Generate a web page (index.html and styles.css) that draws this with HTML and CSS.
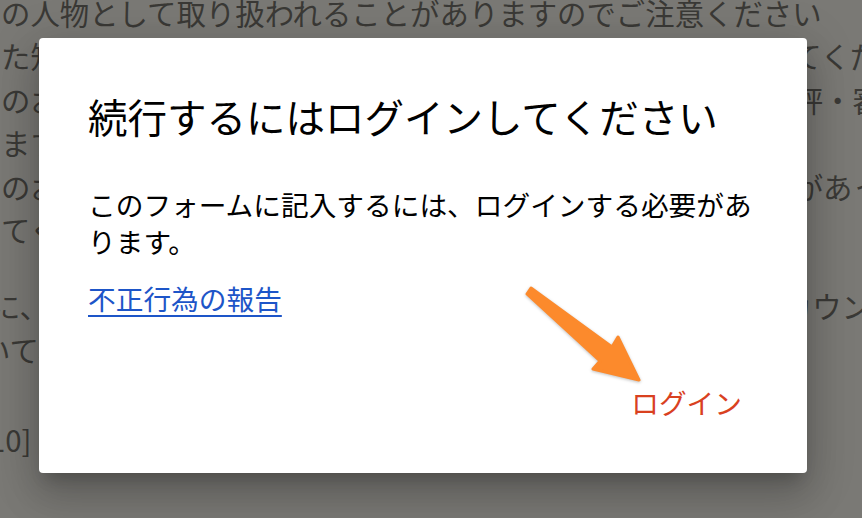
FILE: index.html
```html
<!DOCTYPE html>
<html lang="ja">
<head>
<meta charset="utf-8">
<title>ログイン</title>
<link rel="stylesheet" href="styles.css">
</head>
<body>
<div class="page">
  <div class="para">
    <div class="line">の人物として取り扱われることがありますのでご注意ください</div>
    <div class="line">た知識や経験をもとに、事実に基づいた正確な内容を記入してください</div>
    <div class="line">のお店や施設についての感想、体験談、サービスへの率直な評・審査</div>
    <div class="line">ます。以下の点についてご確認ください。</div>
    <div class="line">のお客様からいただいたご意見の中に、不適切な表現や内容があった</div>
    <div class="line">てください。</div>
  </div>
  <div class="para para-2">
    <div class="line shift-a">に、投稿内容が規約に違反していると判断された場合は、アカウントを</div>
    <div class="line shift-b">いて、順次対応いたします。</div>
  </div>
  <div class="para para-3">
    <div class="line shift-c">[10]</div>
  </div>
</div>

<div class="dialog" role="dialog" aria-labelledby="dlg-title">
  <h2 class="dialog-title" id="dlg-title">続行するにはログインしてください</h2>
  <p class="dialog-text">このフォームに記入するには、ログインする必要があります。</p>
  <p class="dialog-link-row"><a class="dialog-link" href="#">不正行為の報告</a></p>
  <div class="dialog-actions">
    <button class="dialog-button" type="button">ログイン</button>
  </div>
</div>

<svg class="arrow" width="862" height="518" viewBox="0 0 862 518" aria-hidden="true">
  <polygon points="531,288 612,347 618,337 639,380 593,369 600,361 527,294" fill="#fc8a2c" stroke="#fc8a2c" stroke-width="3" stroke-linejoin="round"/>
</svg>
</body>
</html>
```
FILE: styles.css
```css
html, body {
  margin: 0;
  padding: 0;
}
body {
  width: 862px;
  height: 518px;
  overflow: hidden;
  background: #7a7975;
  font-family: "Noto Sans CJK JP", "Noto Sans", sans-serif;
  position: relative;
}
.page {
  margin-top: -9px;
  color: #3a3936;
  font-size: 29.4px;
  line-height: 43.4px;
}
.line {
  white-space: nowrap;
  margin-left: 1px;
}
.para-2 {
  margin-top: 33px;
}
.para-3 {
  margin-top: 47px;
}
.shift-a { margin-left: -9px; }
.shift-b { margin-left: -19px; }
.shift-c { margin-left: -21px; }

.dialog {
  position: absolute;
  left: 39px;
  top: 38px;
  width: 768px;
  height: 435px;
  box-sizing: border-box;
  background: #fff;
  border-radius: 4px;
  padding: 54px 49px 0 49px;
  box-shadow: 0 11px 15px -7px rgba(0,0,0,.2), 0 24px 38px 3px rgba(0,0,0,.14), 0 9px 46px 8px rgba(0,0,0,.12);
  color: #000;
}
.dialog-title {
  margin: 0;
  font-size: 39.5px;
  font-weight: 400;
  line-height: 48px;
  white-space: nowrap;
}
.dialog-text {
  margin: 46px 0 0 0;
  font-size: 27.7px;
  line-height: 37px;
}
.dialog-link-row {
  margin: 20px 0 0 0;
  font-size: 27.7px;
  line-height: 37px;
}
.dialog-link {
  color: #1d55c8;
  text-decoration: underline;
  text-underline-offset: 5px;
  text-decoration-thickness: 2px;
}
.dialog-actions {
  display: flex;
  justify-content: flex-end;
  margin-top: 59px;
  margin-right: -2px;
}
.dialog-button {
  border: 0;
  background: transparent;
  padding: 8px 18px;
  font-family: inherit;
  font-size: 27.7px;
  line-height: 37px;
  color: #d9411f;
  cursor: pointer;
}
.arrow {
  position: absolute;
  left: 0;
  top: 0;
  pointer-events: none;
  filter: drop-shadow(0 1px 1.5px rgba(0,0,0,.25));
}
```
